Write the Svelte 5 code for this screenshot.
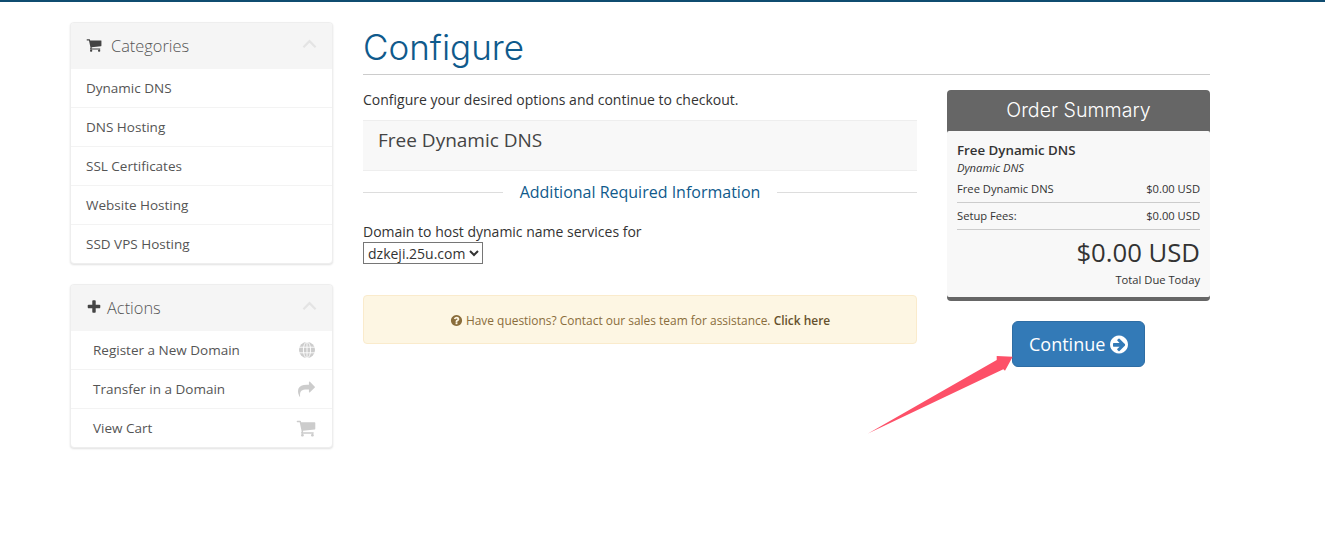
<script>
  const categories = ['Dynamic DNS', 'DNS Hosting', 'SSL Certificates', 'Website Hosting', 'SSD VPS Hosting'];

  const cart = 'M704 1536q0 52-38 90t-90 38-90-38-38-90 38-90 90-38 90 38 38 90zm896 0q0 52-38 90t-90 38-90-38-38-90 38-90 90-38 90 38 38 90zm128-1088v512q0 24-16.5 42.5t-40.5 21.5l-1044 122q13 60 13 70 0 16-24 64h920q26 0 45 19t19 45-19 45-45 19h-1024q-26 0-45-19t-19-45q0-11 8-31.5t16-36 21.5-40 15.5-29.5l-177-823h-204q-26 0-45-19t-19-45 19-45 45-19h256q16 0 28.5 6.5t19.5 15.5 13 24.5 8 26 5.5 29.5 4.5 26h1201q26 0 45 19t19 45z';
  const plus = 'M1600 736v192q0 40-28 68t-68 28h-416v416q0 40-28 68t-68 28h-192q-40 0-68-28t-28-68v-416h-416q-40 0-68-28t-28-68v-192q0-40 28-68t68-28h416v-416q0-40 28-68t68-28h192q40 0 68 28t28 68v416h416q40 0 68 28t28 68z';
  const share = 'M1792 640q0 26-19 45l-512 512q-19 19-45 19t-45-19-19-45v-256h-224q-98 0-175.5 6t-154 21.5-133 42.5-105.5 69.5-80 101-48.5 138.5-17.5 181q0 55 5 123 0 6 2.5 23.5t2.5 26.5q0 15-8.5 25t-23.5 10q-16 0-28-17-7-9-13-22t-13.5-30-10.5-24q-127-285-127-451 0-199 53-333 162-403 875-403h224v-256q0-26 19-45t45-19 45 19l512 512q19 19 19 45z';
  const arrowCircle = 'M1285 896q0-27-18-45l-91-91-362-362q-18-18-45-18t-45 18l-91 91q-18 18-18 45t18 45l189 189h-502q-26 0-45 19t-19 45v182q0 26 19 45t45 19h502l-189 189q-19 19-19 45t19 45l91 91q18 18 45 18t45-18l362-362 91-91q18-18 18-45zm251 0q0 209-103 385.5t-279.5 279.5-385.5 103-385.5-103-279.5-279.5-103-385.5 103-385.5 279.5-279.5 385.5-103 385.5 103 279.5 279.5 103 385.5z';
  const question = 'M1024 1376v-192q0-14-9-23t-23-9h-192q-14 0-23 9t-9 23v192q0 14 9 23t23 9h192q14 0 23-9t9-23zm256-672q0-88-55.5-163t-138.5-116-170-41q-243 0-371 213-15 24 8 42l132 100q7 6 19 6 16 0 25-12 53-68 86-92 34-24 86-24 48 0 85.5 26t37.5 59q0 38-20 61t-68 45q-63 28-115.5 86.5t-52.5 125.5v36q0 14 9 23t23 9h192q14 0 23-9t9-23q0-19 21.5-49.5t54.5-49.5q32-18 49-28.5t46-35 44.5-48 28-60.5 12.5-81zm384 192q0 209-103 385.5t-279.5 279.5-385.5 103-385.5-103-279.5-279.5-103-385.5 103-385.5 279.5-279.5 385.5-103 385.5 103 279.5 279.5 103 385.5z';
</script>

<div class="page">
  <aside class="sidebar">
    <section class="panel">
      <header class="panel-heading">
        <svg class="head-icon cart" viewBox="0 0 1792 1792"><path d={cart} /></svg>
        <span>Categories</span>
        <svg class="chevron" viewBox="0 0 16 10"><path d="M1.5 8.5 8 2l6.5 6.5" /></svg>
      </header>
      {#each categories as item}
        <div class="item">{item}</div>
      {/each}
    </section>

    <section class="panel">
      <header class="panel-heading">
        <svg class="head-icon plus" viewBox="0 0 1792 1792"><path d={plus} /></svg>
        <span>Actions</span>
        <svg class="chevron" viewBox="0 0 16 10"><path d="M1.5 8.5 8 2l6.5 6.5" /></svg>
      </header>
      <div class="item action">
        Register a New Domain
        <svg class="side-icon globe" viewBox="0 0 16 16">
          <circle cx="8" cy="8" r="8" fill="#ccc" />
          <g fill="none" stroke="#fff" stroke-width="0.9">
            <ellipse cx="8" cy="8" rx="3.6" ry="8" />
            <path d="M0 5.2h16M0 10.8h16M8 0v16" />
          </g>
        </svg>
      </div>
      <div class="item action">
        Transfer in a Domain
        <svg class="side-icon" viewBox="0 0 1792 1792"><path d={share} /></svg>
      </div>
      <div class="item action">
        View Cart
        <svg class="side-icon big" viewBox="0 0 1792 1792"><path d={cart} /></svg>
      </div>
    </section>
  </aside>

  <main class="main">
    <h1>Configure</h1>
    <div class="columns">
      <div class="config">
        <p class="intro">Configure your desired options and continue to checkout.</p>
        <div class="product">Free Dynamic DNS</div>
        <div class="sub-heading"><span>Additional Required Information</span></div>
        <label class="field">
          Domain to host dynamic name services for
          <select>
            <option>dzkeji.25u.com</option>
          </select>
        </label>
        <div class="alert">
          <svg class="q-icon" viewBox="0 0 1792 1792"><path d={question} /></svg>
          Have questions? Contact our sales team for assistance. <b>Click here</b>
        </div>
      </div>

      <div class="side">
        <div class="summary">
          <h2>Order Summary</h2>
          <div class="summary-body">
            <div class="product-name">Free Dynamic DNS</div>
            <div class="product-group">Dynamic DNS</div>
            <div class="line"><span>Free Dynamic DNS</span><span>$0.00 USD</span></div>
            <div class="line fees"><span>Setup Fees:</span><span>$0.00 USD</span></div>
            <div class="total">$0.00 USD</div>
            <div class="total-label">Total Due Today</div>
          </div>
        </div>
        <button class="continue">
          Continue
          <svg viewBox="0 0 1792 1792"><path d={arrowCircle} /></svg>
        </button>
      </div>
    </div>
  </main>

  <svg class="annotation" viewBox="0 0 150 82" width="150" height="82">
    <polygon points="2,79.5 130.7,6 130.7,2 146.7,2.7 139,16.7 137.3,15.3" fill="#fd5068" />
  </svg>
</div>

<style>
  :global(body) {
    margin: 0;
    background: #fff;
  }

  .page {
    position: relative;
    display: flex;
    gap: 30px;
    box-sizing: border-box;
    height: 537px;
    padding: 20px 0 0 70px;
    border-top: 2px solid #0f4c70;
    font-family: "Open Sans", sans-serif;
    font-size: 14px;
    color: #333;
    overflow: hidden;
  }

  .sidebar {
    width: 263px;
    flex: none;
  }

  .panel {
    margin-bottom: 20px;
    border: 1px solid #eee;
    border-radius: 4px;
    background: #fff;
    box-shadow: 0 1px 2px rgba(0, 0, 0, 0.12);
  }

  .panel-heading {
    display: flex;
    align-items: center;
    box-sizing: border-box;
    height: 46px;
    padding: 0 15px 2px;
    background: #f5f5f5;
    border-radius: 3px 3px 0 0;
    font-size: 16.4px;
    font-weight: 300;
    color: #555;
  }

  .head-icon {
    width: 16px;
    height: 16px;
    fill: #444;
  }

  .head-icon.cart {
    margin-right: 9px;
  }

  .head-icon.plus {
    margin-right: 5px;
  }

  .chevron {
    width: 15px;
    height: 10px;
    margin-left: auto;
    margin-top: -3px;
    fill: none;
    stroke: #e4e4e4;
    stroke-width: 2.4;
  }

  .item {
    display: flex;
    align-items: center;
    justify-content: space-between;
    height: 38px;
    padding: 0 15px;
    border-top: 1px solid #f3f3f3;
    font-size: 13.5px;
    color: #555;
  }

  .panel-heading + .item {
    border-top: 0;
  }

  .action {
    padding: 0 17px 0 22px;
  }

  .side-icon {
    width: 17px;
    height: 17px;
    fill: #ccc;
  }

  .side-icon.globe {
    width: 16px;
    height: 16px;
  }

  .side-icon.big {
    width: 20px;
    height: 20px;
    margin-right: -1px;
  }

  .main {
    width: 847px;
    flex: none;
  }

  h1 {
    margin: 0 0 15px;
    height: 52px;
    border-bottom: 1px solid #ccc;
    font-family: Inter, sans-serif;
    font-size: 35px;
    font-weight: 300;
    line-height: 50px;
    color: #0f5a8c;
  }

  .columns {
    display: flex;
    gap: 30px;
  }

  .config {
    width: 554px;
    flex: none;
  }

  .intro {
    margin: 0 0 10px;
    line-height: 20px;
  }

  .product {
    box-sizing: border-box;
    height: 51px;
    padding: 7px 15px;
    background: #f8f8f8;
    border-top: 1px solid #eee;
    border-bottom: 1px solid #eee;
    font-size: 19px;
    line-height: 24px;
    color: #444;
  }

  .sub-heading {
    display: flex;
    align-items: center;
    gap: 17px;
    margin: 10px 0 18px;
    font-size: 16px;
    line-height: 22px;
    color: #0f5a8c;
  }

  .sub-heading::before,
  .sub-heading::after {
    content: "";
    flex: 1;
    height: 1px;
    background: #ddd;
  }

  .field {
    display: block;
    line-height: 21px;
  }

  select {
    display: block;
    width: 120px;
    height: 22px;
    font-family: "Open Sans", sans-serif;
    font-size: 14px;
    color: #333;
    background: #fff;
  }

  .alert {
    box-sizing: border-box;
    height: 49px;
    margin-top: 31px;
    padding-top: 16px;
    background: #fdf6e3;
    border: 1px solid #faebcc;
    border-radius: 4px;
    font-size: 11.95px;
    line-height: 18px;
    text-align: center;
    color: #8a6d3b;
  }

  .alert b {
    font-weight: 600;
    color: #66512c;
  }

  .q-icon {
    width: 13px;
    height: 13px;
    vertical-align: -2px;
    fill: #8a6d3b;
  }

  .side {
    width: 263px;
    flex: none;
  }

  .summary {
    border-radius: 4px;
    background: #666;
    padding-bottom: 4px;
  }

  h2 {
    margin: 0;
    height: 41px;
    font-family: Inter, sans-serif;
    font-size: 19.6px;
    font-weight: 300;
    line-height: 41px;
    text-align: center;
    color: #fff;
  }

  .summary-body {
    box-sizing: border-box;
    height: 166px;
    padding: 10px 10px 0;
    background: #f8f8f8;
    border-radius: 2px;
    font-size: 11.2px;
    line-height: 17px;
  }

  .product-name {
    font-size: 13.3px;
    font-weight: 600;
    line-height: 18px;
  }

  .product-group {
    font-style: italic;
  }

  .line {
    display: flex;
    justify-content: space-between;
    padding: 5px 0 6px;
    border-bottom: 1px solid #ccc;
    line-height: 15px;
  }

  .line.fees {
    padding-top: 5px;
  }

  .total {
    margin-top: 5px;
    font-size: 25.7px;
    line-height: 36px;
    text-align: right;
  }

  .total-label {
    text-align: right;
  }

  .continue {
    display: flex;
    align-items: center;
    gap: 5px;
    width: 133px;
    height: 46px;
    margin: 20px 0 0 65px;
    padding: 0 0 0 16px;
    background: #337ab7;
    border: 1px solid #2e6da4;
    border-radius: 6px;
    font-family: "Open Sans", sans-serif;
    font-size: 18px;
    color: #fff;
  }

  .continue svg {
    width: 21px;
    height: 21px;
    fill: #fff;
  }

  .annotation {
    position: absolute;
    left: 866px;
    top: 352px;
  }
</style>
